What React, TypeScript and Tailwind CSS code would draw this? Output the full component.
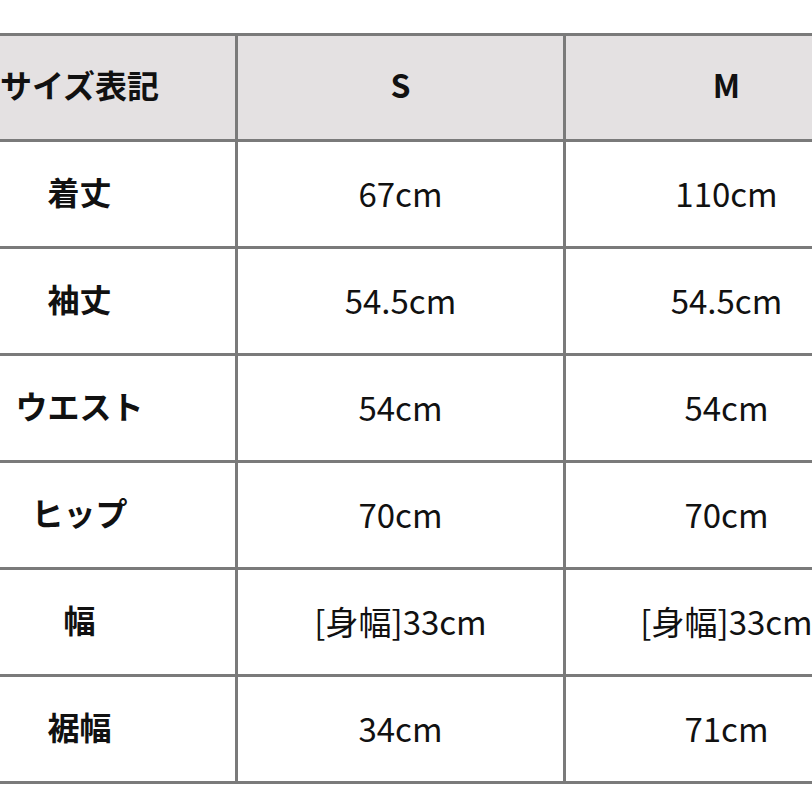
// Size chart table, cropped on both sides like the source photo.
const rows: [string, string, string][] = [
  ["着丈", "67cm", "110cm"],
  ["袖丈", "54.5cm", "54.5cm"],
  ["ウエスト", "54cm", "54cm"],
  ["ヒップ", "70cm", "70cm"],
  ["幅", "[身幅]33cm", "[身幅]33cm"],
  ["裾幅", "34cm", "71cm"],
];

const font = { fontFamily: '"Noto Sans CJK JP", "Noto Sans", sans-serif' };

export default function App() {
  return (
    <div className="relative w-[812px] h-[812px] overflow-hidden bg-white text-[#111]" style={font}>
      <div className="mt-[33px] ml-[-76px] w-[970px] border-t-[3px] border-[#7a7a7a]">
        <div className="grid grid-cols-[314px_328px_324px] bg-[#e4e1e2]">
          <div className="h-[106px] pb-[8px] border-r-[3px] border-b-[3px] border-[#7a7a7a] flex items-center justify-center text-[32px] font-bold">
            サイズ表記
          </div>
          <div className="h-[106px] pb-[8px] border-r-[3px] border-b-[3px] border-[#7a7a7a] flex items-center justify-center text-[32px] font-semibold">
            S
          </div>
          <div className="h-[106px] pb-[8px] border-r-[3px] border-b-[3px] border-[#7a7a7a] flex items-center justify-center text-[32px] font-semibold">
            M
          </div>
        </div>
        {rows.map(([label, s, m]) => (
          <div key={label} className="grid grid-cols-[314px_328px_324px]">
            <div className="h-[107px] pb-[6px] border-r-[3px] border-b-[3px] border-[#7a7a7a] flex items-center justify-center text-[32px] font-bold">
              {label}
            </div>
            <div className="h-[107px] pb-[1px] border-r-[3px] border-b-[3px] border-[#7a7a7a] flex items-center justify-center text-[33px]">
              {s}
            </div>
            <div className="h-[107px] pb-[1px] border-r-[3px] border-b-[3px] border-[#7a7a7a] flex items-center justify-center text-[33px]">
              {m}
            </div>
          </div>
        ))}
      </div>
    </div>
  );
}
